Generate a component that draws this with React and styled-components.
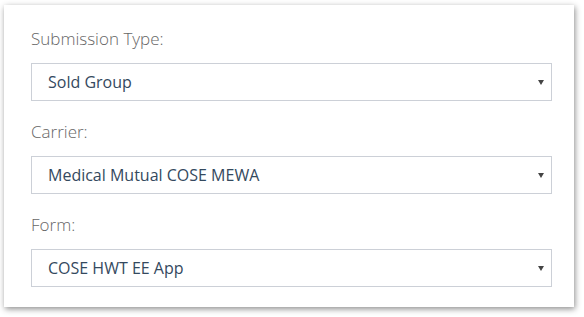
import React from "react";
import styled, { createGlobalStyle } from "styled-components";

const GlobalStyle = createGlobalStyle`
  html, body {
    margin: 0;
    padding: 0;
    background: #ffffff;
  }
  body {
    font-family: "Open Sans", "Liberation Sans", sans-serif;
  }
`;

const Page = styled.div`
  padding: 5px 10px 10px 4px;
`;

const Card = styled.div`
  width: 570px;
  height: 302px;
  box-sizing: border-box;
  background: #fff;
  box-shadow: 1px 2px 6px rgba(0, 0, 0, 0.45);
  padding: 23px 22px 0 27px;
  display: flex;
  flex-direction: column;
`;

const Field = styled.div`
  display: flex;
  flex-direction: column;
  margin-bottom: 20px;
`;

const Label = styled.label`
  font-size: 17px;
  line-height: 22px;
  font-weight: 300;
  color: #666;
  margin-bottom: 13px;
`;

const Select = styled.div`
  position: relative;
  height: 38px;
  box-sizing: border-box;
  border: 1px solid #ccd0d7;
  padding: 0 16px;
  display: flex;
  align-items: center;
  font-size: 16px;
  color: #34495e;
`;

const Caret = styled.span`
  position: absolute;
  right: 7px;
  top: 16px;
  width: 0;
  height: 0;
  border-left: 3px solid transparent;
  border-right: 3px solid transparent;
  border-top: 5px solid #444;
`;

const fields = [
  { label: "Submission Type:", value: "Sold Group" },
  { label: "Carrier:", value: "Medical Mutual COSE MEWA" },
  { label: "Form:", value: "COSE HWT EE App" },
];

export default function App() {
  return (
    <>
      <GlobalStyle />
      <Page>
        <Card>
          {fields.map((f) => (
            <Field key={f.label}>
              <Label>{f.label}</Label>
              <Select>
                {f.value}
                <Caret />
              </Select>
            </Field>
          ))}
        </Card>
      </Page>
    </>
  );
}
